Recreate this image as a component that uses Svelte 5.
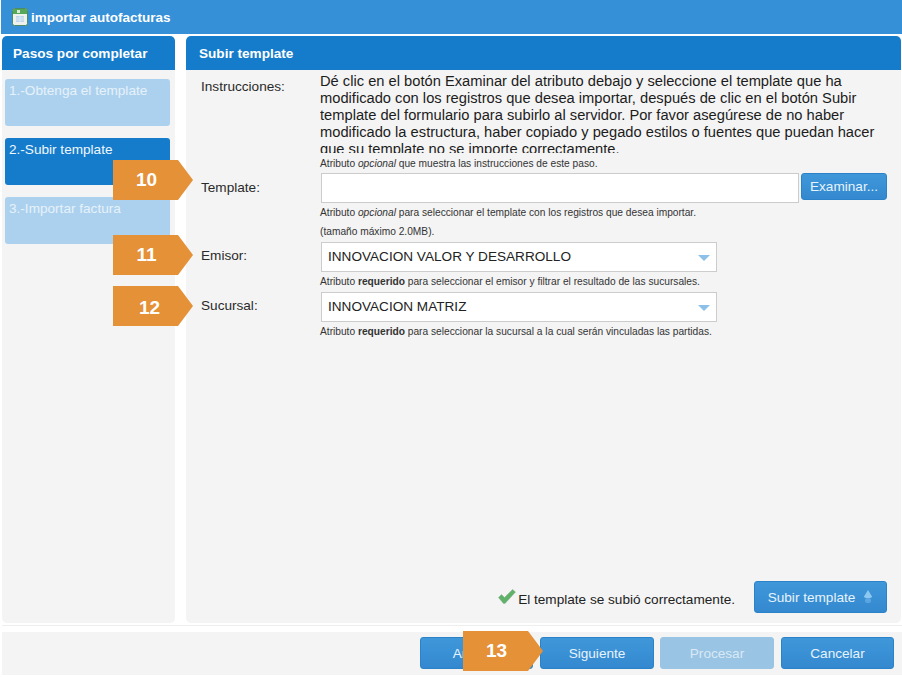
<script>
  const steps = [
    { label: '1.-Obtenga el template', active: false },
    { label: '2.-Subir template', active: true },
    { label: '3.-Importar factura', active: false }
  ];

  const callouts = [
    { n: 10, left: 113, top: 160, dx: 0, dy: 0 },
    { n: 11, left: 113, top: 235, dx: 0, dy: 0 },
    { n: 12, left: 113, top: 286, dx: 3, dy: 2 },
    { n: 13, left: 463, top: 631, dx: 0, dy: 0 }
  ];
</script>

<div class="page">
  <header class="title-bar">
    <svg class="app-icon" width="16" height="18" viewBox="0 0 16 18">
      <rect x="0.5" y="0.5" width="15" height="17" rx="2" fill="#eef1ee" stroke="#4d8a66" />
      <rect x="1" y="1" width="14" height="5" fill="#55a85a" />
      <rect x="5" y="2" width="3" height="3" fill="#d8ecd4" />
      <rect x="4" y="8" width="8" height="6" fill="#bcd6ee" />
      <path d="M4 10h8M4 12h8M8 8v6" stroke="#e8f0f6" stroke-width="0.7" />
    </svg>
    <span>importar autofacturas</span>
  </header>

  <div class="content">
    <aside class="sidebar">
      <h2 class="panel-head side-head">Pasos por completar</h2>
      <div class="steps">
        {#each steps as step}
          <div class="step" class:active={step.active}>{step.label}</div>
        {/each}
      </div>
    </aside>

    <main class="panel">
      <h2 class="panel-head">Subir template</h2>
      <div class="form">
        <div class="row">
          <span class="label top">Instrucciones:</span>
          <div>
            <div class="instructions">
              Dé clic en el botón Examinar del atributo debajo y seleccione el template que ha modificado con los registros que desea importar, después de clic en el botón Subir template del formulario para subirlo al servidor. Por favor asegúrese de no haber modificado la estructura, haber copiado y pegado estilos o fuentes que puedan hacer que su template no se importe correctamente.
            </div>
            <p class="hint first">Atributo <em>opcional</em> que muestra las instrucciones de este paso.</p>
          </div>
        </div>

        <div class="row template-row">
          <span class="label">Template:</span>
          <div>
            <div class="file-line">
              <div class="text-box file-box"></div>
              <button class="btn browse">Examinar...</button>
            </div>
            <p class="hint">Atributo <em>opcional</em> para seleccionar el template con los registros que desea importar.</p>
            <p class="hint size">(tamaño máximo 2.0MB).</p>
          </div>
        </div>

        <div class="row emitter-row">
          <span class="label">Emisor:</span>
          <div>
            <div class="text-box select">
              INNOVACION VALOR Y DESARROLLO
              <span class="caret"></span>
            </div>
            <p class="hint">Atributo <strong>requerido</strong> para seleccionar el emisor y filtrar el resultado de las sucursales.</p>
          </div>
        </div>

        <div class="row branch-row">
          <span class="label">Sucursal:</span>
          <div>
            <div class="text-box select">
              INNOVACION MATRIZ
              <span class="caret"></span>
            </div>
            <p class="hint">Atributo <strong>requerido</strong> para seleccionar la sucursal a la cual serán vinculadas las partidas.</p>
          </div>
        </div>

        <div class="upload-line">
          <svg class="check" width="18" height="15" viewBox="0 0 18 15">
            <path d="M0.5 8.5L3.5 5.5L6.5 8.5L14.5 0.5L17.5 3L7 14.5H5.5z" fill="#5eb368" stroke="#8aa890" stroke-width="0.5" />
          </svg>
          <span class="ok-text">El template se subió correctamente.</span>
          <button class="btn upload">
            Subir template
            <svg width="10" height="16" viewBox="0 0 10 16">
              <path d="M5 1L9 7.5Q9 9 5 9Q1 9 1 7.5z" fill="#8cc8f0" />
              <rect x="2" y="9" width="6" height="5" rx="2.5" fill="#5ba6e0" />
            </svg>
          </button>
        </div>
      </div>
    </main>
  </div>

  <div class="rule"></div>

  <footer class="footer">
    <button class="btn foot">Anterior</button>
    <button class="btn foot">Siguiente</button>
    <button class="btn foot disabled">Procesar</button>
    <button class="btn foot">Cancelar</button>
  </footer>

  {#each callouts as c}
    <div class="callout" style="left: {c.left}px; top: {c.top}px">
      <span style="left: {c.dx}px; top: {c.dy}px">{c.n}</span>
    </div>
  {/each}
</div>

<style>
  :global(body) {
    margin: 0;
    background: #fff;
  }

  .page {
    position: relative;
    width: 902px;
    height: 677px;
    overflow: hidden;
    font-family: "Liberation Sans", Arial, sans-serif;
    color: #222;
  }

  .title-bar {
    height: 34px;
    margin-left: 1px;
    display: flex;
    align-items: center;
    gap: 3px;
    padding-left: 11px;
    background: #3590d8;
    color: #fff;
    font-size: 13.5px;
    font-weight: bold;
  }

  .content {
    display: flex;
    gap: 11px;
    padding: 2px 1px 0 2px;
    height: 587px;
  }

  .sidebar,
  .panel {
    background: #f4f4f4;
    border-radius: 5px;
    overflow: hidden;
  }

  .sidebar {
    width: 173px;
    flex: none;
  }

  .panel {
    flex: 1;
  }

  .panel-head {
    margin: 0;
    height: 34px;
    line-height: 35px;
    padding-left: 13px;
    background: #157ccb;
    color: #fff;
    font-size: 13.6px;
    font-weight: bold;
  }

  .side-head {
    padding-left: 11px;
  }

  .steps {
    display: flex;
    flex-direction: column;
    gap: 12px;
    padding: 9px 5px 0 3px;
  }

  .step {
    box-sizing: border-box;
    height: 47px;
    padding-left: 4px;
    padding-top: 4px;
    border-radius: 3px;
    background: #acd1ee;
    color: #e6f1fa;
    font-size: 13.6px;
    line-height: 16px;
  }

  .step.active {
    background: #157ccb;
    color: #f0f7fc;
  }

  .form {
    position: relative;
    height: 553px;
  }

  .row {
    display: grid;
    grid-template-columns: 119px 1fr;
    padding-left: 15px;
  }

  .label {
    font-size: 13.6px;
    line-height: 28px;
    color: #2a2a2a;
  }

  .label.top {
    line-height: 16px;
    padding-top: 9px;
  }

  .instructions {
    margin-top: 3px;
    width: 560px;
    height: 80px;
    overflow: hidden;
    font-size: 14.7px;
    line-height: 17px;
    color: #1c1c1c;
  }

  .hint {
    margin: 0;
    font-size: 10.2px;
    line-height: 13px;
    color: #333;
  }

  .hint.first {
    margin-top: 4px;
  }

  .hint.size {
    margin-top: 6px;
  }

  .template-row {
    margin-top: 3px;
  }

  .template-row .label {
    padding-top: 1px;
  }

  .emitter-row {
    margin-top: 4px;
  }

  .branch-row {
    margin-top: 4px;
  }

  .file-line {
    display: flex;
    gap: 2px;
    margin-bottom: 3px;
  }

  .text-box {
    box-sizing: border-box;
    height: 30px;
    margin-left: 1px;
    border: 1px solid #ccc;
    background: #fff;
  }

  .file-box {
    width: 478px;
  }

  .select {
    position: relative;
    width: 396px;
    margin-bottom: 3px;
    padding-left: 6px;
    font-size: 13.6px;
    line-height: 28px;
    color: #222;
  }

  .caret {
    position: absolute;
    right: 6px;
    top: 12px;
    border-left: 6px solid transparent;
    border-right: 6px solid transparent;
    border-top: 6px solid #8cc0e8;
  }

  .btn {
    box-sizing: border-box;
    border: 1px solid #2b82c6;
    border-radius: 3px;
    background: linear-gradient(#3f98da, #3488cf);
    color: #e8f3fb;
    font-family: inherit;
    font-size: 13.6px;
    padding: 0;
  }

  .browse {
    width: 86px;
    height: 27px;
  }

  .upload-line {
    position: absolute;
    right: 14px;
    bottom: 10px;
    display: flex;
    align-items: center;
  }

  .check {
    margin-right: 2px;
    margin-bottom: 1px;
  }

  .ok-text {
    font-size: 13.6px;
    line-height: 16px;
    margin-right: 19px;
    color: #222;
    padding-top: 5px;
  }

  .upload {
    width: 133px;
    height: 32px;
    display: flex;
    align-items: center;
    justify-content: center;
    gap: 8px;
  }

  .rule {
    height: 1px;
    margin: 2px 0 0 2px;
    background: #eee;
  }

  .footer {
    display: flex;
    justify-content: flex-end;
    gap: 6px;
    margin: 6px 0 0 2px;
    height: 43px;
    box-sizing: border-box;
    padding: 5px 8px 0 0;
    background: #f4f4f4;
  }

  .foot {
    width: 114px;
    height: 32px;
  }

  .foot:first-child {
    width: 113px;
    margin-right: 1px;
  }

  .foot:last-child {
    width: 113px;
    margin-left: 1px;
  }

  .foot.disabled {
    background: #9ac4e4;
    border-color: #9ac4e4;
    color: #d8e9f5;
  }

  /* numbered markers that sit over the screen */
  .callout {
    position: absolute;
    box-sizing: border-box;
    width: 80px;
    height: 40px;
    padding-right: 13px;
    background: #e59137;
    color: #fff;
    font-size: 19px;
    font-weight: bold;
    line-height: 40px;
    text-align: center;
    clip-path: polygon(0 0, 65px 0, 80px 50%, 65px 100%, 0 100%);
  }

  .callout span {
    position: relative;
  }
</style>
